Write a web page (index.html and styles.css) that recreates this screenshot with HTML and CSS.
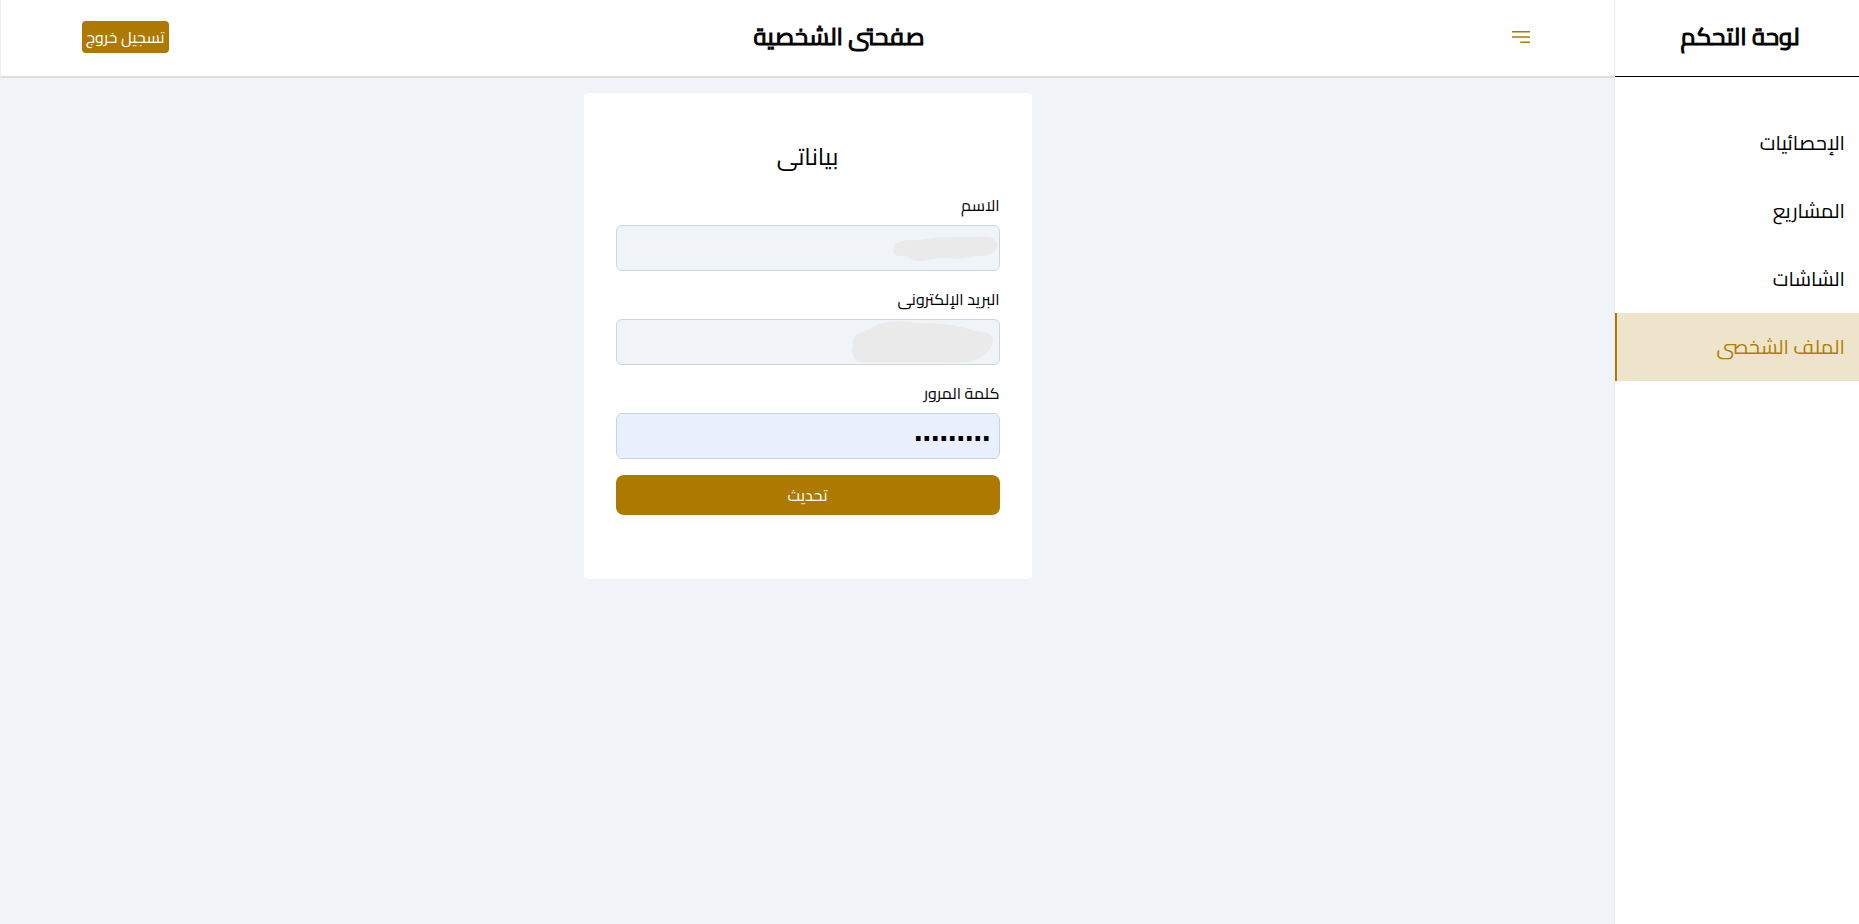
FILE: index.html
```html
<!DOCTYPE html>
<html lang="ar" dir="rtl">
<head>
<meta charset="utf-8">
<meta name="viewport" content="width=device-width, initial-scale=1">
<title>صفحتى الشخصية</title>
<link rel="stylesheet" href="styles.css">
</head>
<body>
<div class="layout">
  <aside class="sidebar">
    <div class="sidebar-head"><h2 class="sidebar-title">لوحة التحكم</h2></div>
    <nav class="nav">
      <a class="nav-link" href="#stats">الإحصائيات</a>
      <a class="nav-link" href="#projects">المشاريع</a>
      <a class="nav-link" href="#screens">الشاشات</a>
      <a class="nav-link active" href="#profile" aria-current="page">الملف الشخصى</a>
    </nav>
  </aside>
  <div class="content">
    <header class="topbar">
      <button class="menu-button" type="button" aria-label="القائمة">
        <svg width="24" height="24" viewBox="0 0 24 24" fill="#ad7900" aria-hidden="true">
          <rect x="3" y="6" width="18" height="1.5"/>
          <rect x="3" y="11.25" width="18" height="1.5"/>
          <rect x="11.25" y="16.5" width="9.75" height="1.5"/>
        </svg>
      </button>
      <h1 class="page-title">صفحتى الشخصية</h1>
      <button class="logout" type="button">تسجيل خروج</button>
    </header>
    <main class="main">
      <form class="card">
        <h2 class="card-title">بياناتى</h2>
        <div class="field">
          <label class="label" for="name">الاسم</label>
          <div class="control">
            <input class="input" id="name" type="text">
            <svg class="smudge" width="180" height="46" viewBox="0 0 180 46" fill="#eaeaea" aria-hidden="true">
              <path d="M73 25C73 17 82 15 91 15C105 15 110 12 122 12.500L168 12C175 13 177 16 177 20C177 28 167 31 159 31C145 31 145 34 134 33.500C122 33 114 33 108 35C100 37 91 36 87 31C79 32 73 31 73 25Z"/>
            </svg>
          </div>
        </div>
        <div class="field">
          <label class="label" for="email">البريد الإلكترونى</label>
          <div class="control">
            <input class="input" id="email" type="email">
            <svg class="smudge" width="180" height="46" viewBox="0 0 180 46" fill="#eaeaea" aria-hidden="true">
              <path d="M33 25C32 18 36 15 42 13C49 11 53 8 59 5C69 2 83 2 96 4C116 4 132 5 145 9C157 12 158 13 163 13C169 13 173 17 173 22C172 31 163 39 152 42C142 45 129 43 114 43.500H43C35 43 32 37 32 30Z"/>
            </svg>
          </div>
        </div>
        <div class="field">
          <label class="label" for="password">كلمة المرور</label>
          <input class="input filled" id="password" type="password" value="password1">
        </div>
        <button class="submit" type="button">تحديث</button>
      </form>
    </main>
  </div>
</div>
</body>
</html>
```
FILE: styles.css
```css
* {
  box-sizing: border-box;
}

body {
  margin: 0;
  background: #f0f4f8;
  color: #000;
  font-family: Cairo, "DejaVu Sans", sans-serif;
  font-size: 16px;
  line-height: 24px;
}

h1,
h2 {
  margin: 0;
}

button,
input {
  font: inherit;
}

.layout {
  display: flex;
  min-height: 100vh;
}

.sidebar {
  position: relative;
  flex: 0 0 244px;
  background: #fff;
  box-shadow: -1px 0 #e8ebee;
}

.sidebar-head {
  display: flex;
  align-items: center;
  justify-content: center;
  height: 77px;
  padding: 0 0 2px 6px;
  border-bottom: 1px solid #000;
}

.sidebar-title,
.page-title {
  font-size: 24px;
  line-height: 32px;
  font-weight: 400;
  -webkit-text-stroke: 1px currentColor;
}

.nav {
  display: flex;
  flex-direction: column;
  padding-top: 32px;
}

.nav-link {
  padding: 18px 14px;
  color: #000;
  font-size: 20px;
  line-height: 32px;
  text-decoration: none;
}

.nav-link.active {
  border-left: 2px solid #ad7900;
  background: #eee4cc;
  color: #b17e00;
}

.content {
  flex: 1;
  min-width: 0;
}

.topbar {
  display: flex;
  align-items: center;
  justify-content: space-between;
  height: 78px;
  padding: 0 5% 2px;
  border: solid #eee;
  border-width: 0 1px 2px;
  border-bottom-color: #dcdfe2;
  background: #fff;
}

.menu-button {
  display: flex;
  padding: 0;
  border: 0;
  background: none;
}

.logout {
  padding: 4px;
  border: 0;
  border-radius: 4px;
  background: #ad7900;
  color: #fff;
  white-space: nowrap;
}

.main {
  display: flex;
  justify-content: center;
  padding: 15px 16px;
}

.card {
  display: flex;
  flex-direction: column;
  gap: 16px;
  width: 100%;
  max-width: 448px;
  padding: 48px 32px 64px;
  border-radius: 4px;
  background: #fff;
}

.card-title {
  margin-bottom: 4px;
  font-size: 24px;
  line-height: 32px;
  font-weight: 400;
  text-align: center;
}

.field {
  display: flex;
  flex-direction: column;
  gap: 8px;
}

.control {
  position: relative;
}

.input {
  display: block;
  width: 100%;
  height: 46px;
  padding: 8px;
  border: 1px solid #cbd5e1;
  border-radius: 6px;
  background: #f0f4f8;
  font-size: 18px;
}

.input.filled {
  background: #e8f0fe;
}

.smudge {
  position: absolute;
  top: 0;
  right: 0;
}

.submit {
  height: 40px;
  border: 0;
  border-radius: 8px;
  background: #ad7900;
  color: #fff;
}
```
